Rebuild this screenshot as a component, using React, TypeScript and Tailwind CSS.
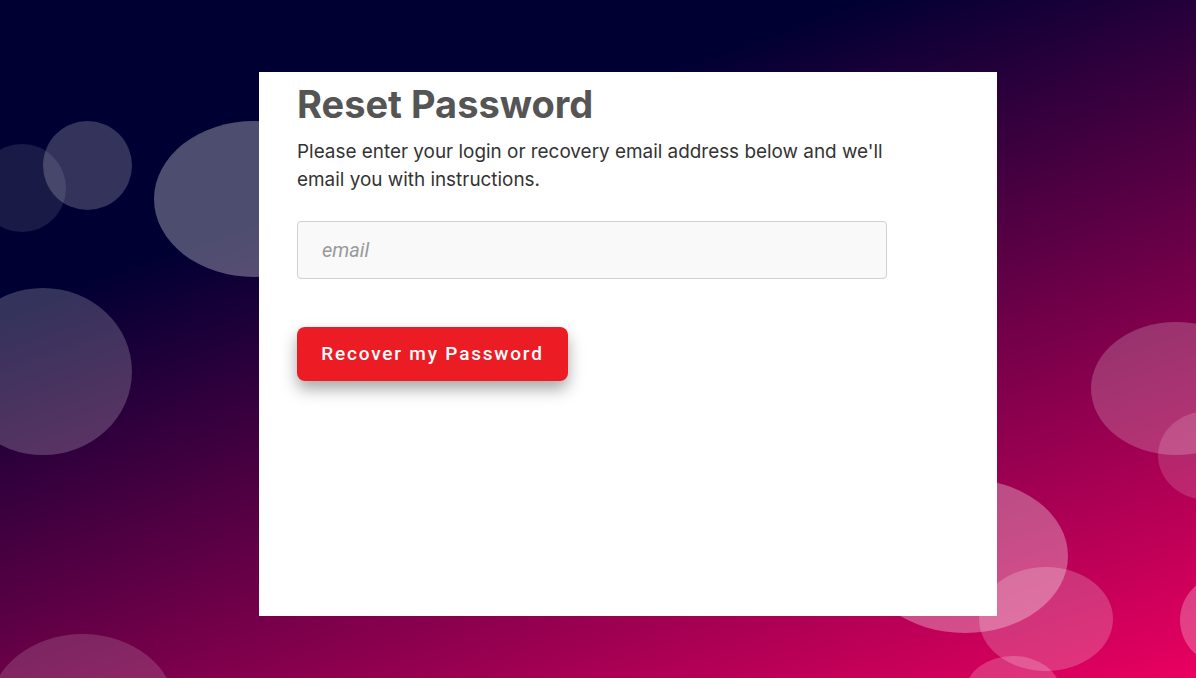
import React from "react";

const bubbles = [
	{ left: -22, top: 144, w: 88, h: 88, o: "bg-white/10" },
	{ left: 43, top: 121, w: 89, h: 89, o: "bg-white/20" },
	{ left: 154, top: 121, w: 200, h: 156, o: "bg-white/30" },
	{ left: -46, top: 288, w: 178, h: 167, o: "bg-white/20" },
	{ left: -10, top: 634, w: 185, h: 150, o: "bg-white/15" },
	{ left: 1091, top: 322, w: 170, h: 133, o: "bg-white/20" },
	{ left: 1158, top: 411, w: 100, h: 89, o: "bg-white/15" },
	{ left: 862, top: 479, w: 206, h: 154, o: "bg-white/30" },
	{ left: 979, top: 567, w: 134, h: 104, o: "bg-white/20" },
	{ left: 1180, top: 575, w: 90, h: 90, o: "bg-white/25" },
	{ left: 966, top: 656, w: 94, h: 70, o: "bg-white/20" },
];

export default function App() {
	return (
		<div className="relative w-full h-[678px] overflow-hidden bg-[linear-gradient(160deg,#000033_28%,#ea0060_100%)]">
			{bubbles.map((b, i) => (
				<div
					key={i}
					className={`absolute rounded-[50%] ${b.o}`}
					style={{ left: b.left, top: b.top, width: b.w, height: b.h }}
				/>
			))}
			<div className="relative pt-[72px] pl-[259px]">
				<div className="w-[738px] h-[544px] bg-white px-[38px] pt-[10px] font-['Inter',sans-serif]">
					<h1 className="text-[38px] leading-[44px] font-bold text-[#555555]">Reset Password</h1>
					<p className="mt-[12px] text-[18.9px] leading-[28px] text-[#333333] max-w-[600px]">
						Please enter your login or recovery email address below and we'll email you with instructions.
					</p>
					<input
						type="text"
						placeholder="email"
						className="mt-[27px] block w-[590px] h-[58px] rounded-[4px] border border-[#d0d0d0] bg-[#f9f9f9] px-[24px] text-[20px] italic font-['Roboto',sans-serif] placeholder:text-[#9a9a9a] focus:outline-none"
					/>
					<button className="mt-[48px] h-[54px] w-[271px] rounded-[8px] bg-[#ec1c24] text-white text-[19px] font-medium tracking-[1.8px] font-['Roboto',sans-serif] shadow-[0_8px_16px_rgba(0,0,0,0.35)]">
						Recover my Password
					</button>
				</div>
			</div>
		</div>
	);
}
